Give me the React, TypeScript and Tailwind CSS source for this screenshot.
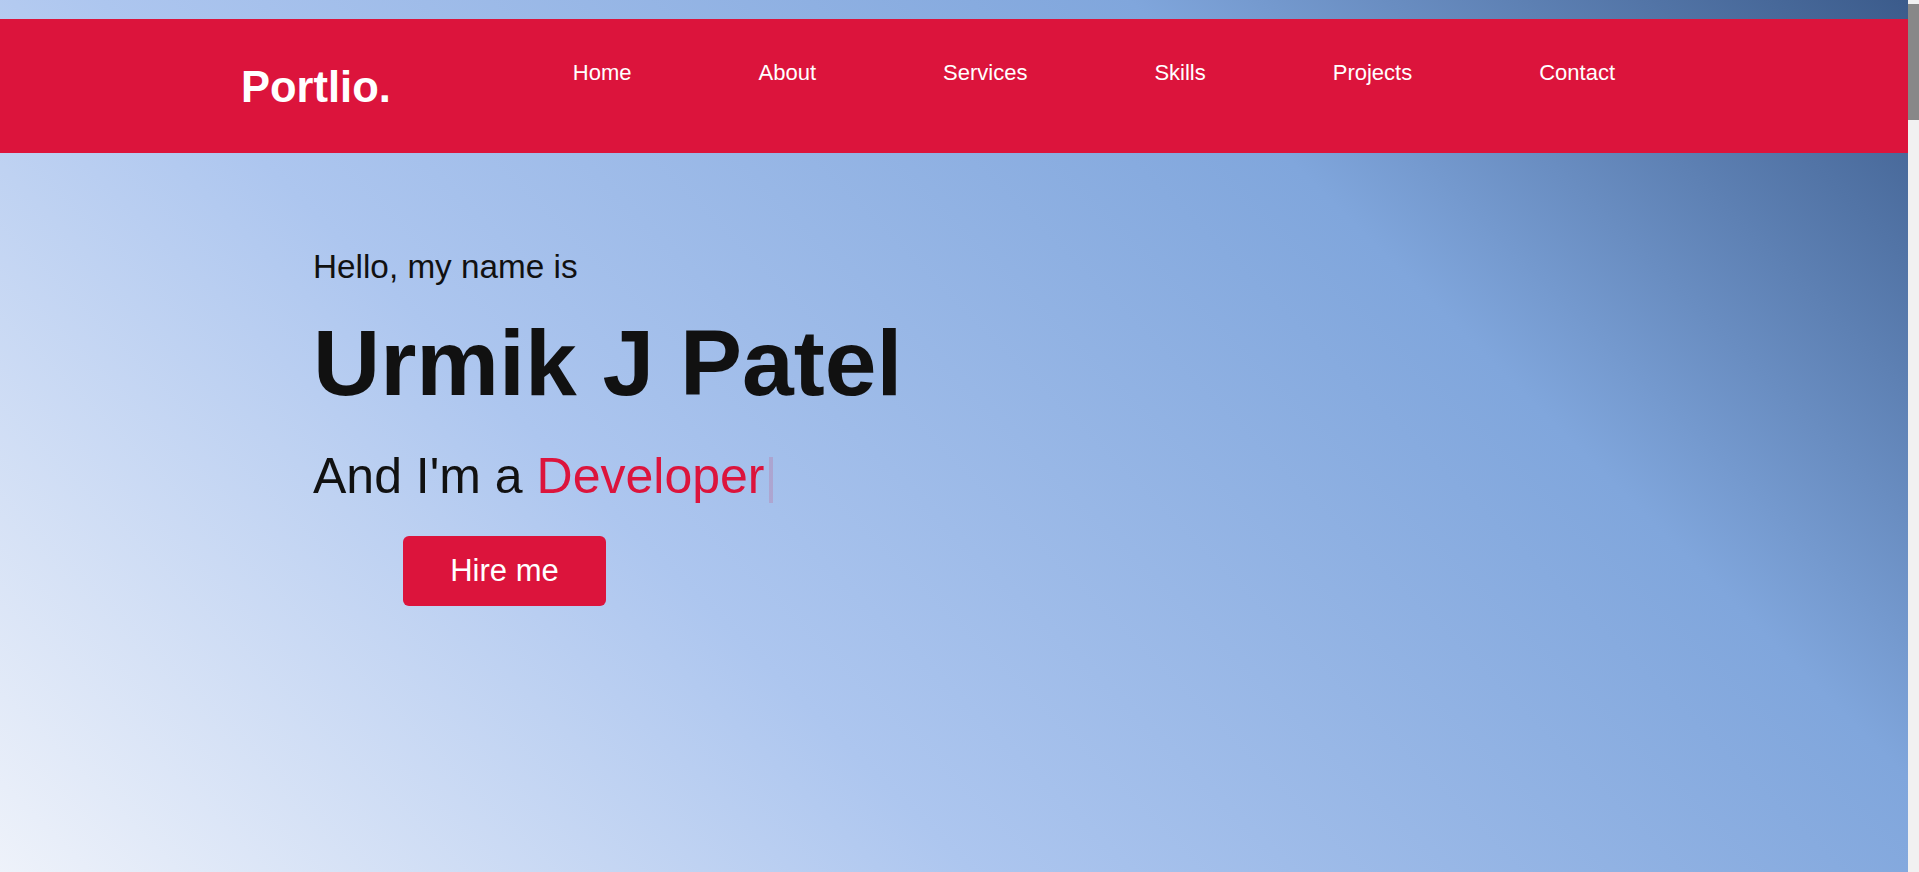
import React from "react";

const links = ["Home", "About", "Services", "Skills", "Projects", "Contact"];
const sections = ["about", "services", "skills", "projects", "contact"];

const Navbar: React.FC = () => {
  return (
    <header className="h-[134px] bg-[#dc143c] flex items-start pt-[41px] pl-[241px]">
      <a href="#home" className="text-[43.5px] leading-[54px] font-bold text-white">
        Portlio.
      </a>
      <ul className="flex gap-[127px] ml-[182px]">
        {links.map((link) => (
          <li key={link}>
            <a
              href={`#${link.toLowerCase()}`}
              className="text-[22px] leading-[26px] text-white hover:text-[#111]"
            >
              {link}
            </a>
          </li>
        ))}
      </ul>
    </header>
  );
};

const Hero: React.FC = () => {
  return (
    <section
      id="home"
      className="h-[872px] pt-[19px] bg-[linear-gradient(45deg,#eef2fa_0%,#adc6ef_35%,#80a6dc_72%,#3b5b8b_100%)]"
    >
      <Navbar />
      <div className="pl-[313px] pt-[94px] text-[#111]">
        <p className="text-[33.3px] leading-[40px]">Hello, my name is</p>
        <h1 className="mt-[21px] text-[93px] leading-[110px] font-bold">Urmik J Patel</h1>
        <p className="mt-[28px] text-[50px] leading-[60px]">
          And I'm a <span className="text-[#dc143c]">Developer</span>
          <span className="text-[#dc143c] opacity-15">|</span>
        </p>
        <a
          href="#contact"
          className="mt-[30px] ml-[90px] w-[203px] h-[70px] rounded-[6px] bg-[#dc143c] text-white text-[31px] flex items-center justify-center"
        >
          Hire me
        </a>
      </div>
    </section>
  );
};

const ScrollTrack: React.FC = () => (
  <div className="w-[11px] bg-[#f1f1f1] pt-1">
    <div className="h-[116px] bg-[#888]" />
  </div>
);

export default function App() {
  return (
    <div className="flex h-screen font-[family-name:Liberation_Sans,Arial,sans-serif]">
      <main className="flex-1 overflow-y-auto [scrollbar-width:none]">
        <Hero />
        {sections.map((id) => (
          <section key={id} id={id} className="h-[1126px] bg-white" />
        ))}
      </main>
      <ScrollTrack />
    </div>
  );
}
